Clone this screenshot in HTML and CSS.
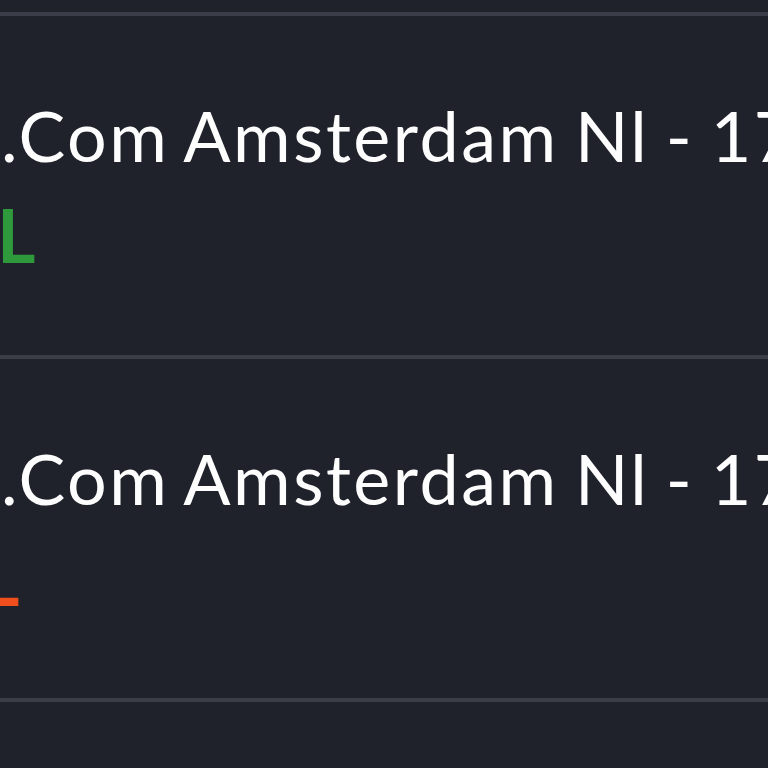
FILE: index.html
```html
<!DOCTYPE html>
<html>
<head>
<meta charset="utf-8">
<link rel="stylesheet" href="styles.css">
</head>
<body>
    <div class="list">
        <div class="row">
            <div class="match">.Com Amsterdam Nl - 17</div>
            <div class="result won">L</div>
        </div>
        <div class="row">
            <div class="match">.Com Amsterdam Nl - 17</div>
            <div class="result lost">L</div>
        </div>
        <div class="row">
        </div>
    </div>
</body>
</html>
```

FILE: styles.css
```css
html, body
{
    margin: 0;
    padding: 0;
    background: #1f222b;
    overflow: hidden;
}

.list
{
    padding-top: 12px;
    width: 900px;
}

.row
{
    border-top: 4px solid #3a3d48;
    padding: 77px 0 76px 1px;
    font-family: Lato, "Liberation Sans", sans-serif;
}

.match
{
    color: #fdfdfd;
    font-size: 70px;
    line-height: 84px;
    letter-spacing: 2.5px;
    word-spacing: -4px;
    white-space: nowrap;
}

.result
{
    margin-top: 13px;
    margin-left: -4px;
    font-size: 74px;
    font-weight: 700;
    line-height: 89px;
}

.won
{
    color: #2f9a3c;
}

.lost
{
    color: #f04e1c;
    margin-left: -20px;
}
```
